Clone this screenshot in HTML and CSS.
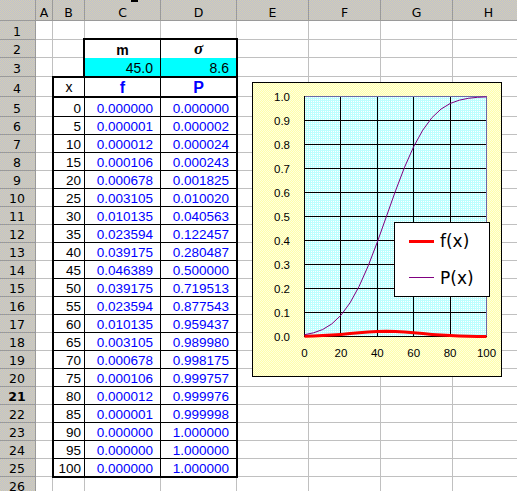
FILE: index.html
```html
<!DOCTYPE html>
<html>
<head>
<meta charset="utf-8">
<title>Sheet</title>
<link rel="stylesheet" href="styles.css">
</head>
<body>
<div class="sheet">
  <div class="hd corner"></div>
  <div class="hd ch">A</div><div class="hd ch">B</div><div class="hd ch cc">C</div><div class="hd ch">D</div><div class="hd ch">E</div><div class="hd ch">F</div><div class="hd ch">G</div><div class="hd ch">H</div>

  <div class="hd rh">1</div><i class="c"></i><i class="c"></i><i class="c"></i><i class="c"></i><i class="c"></i><i class="c"></i><i class="c"></i><i class="c"></i>
  <div class="hd rh">2</div><i class="c"></i><i class="c"></i><i class="c"></i><i class="c"></i><i class="c"></i><i class="c"></i>
  <div class="hd rh">3</div><i class="c"></i><i class="c"></i><i class="c"></i><i class="c"></i><i class="c"></i><i class="c"></i>
  <div class="hd rh">4</div><i class="c"></i><i class="c"></i><i class="c"></i><i class="c"></i><i class="c"></i>
  <div class="hd rh">5</div><i class="c"></i><i class="c"></i><i class="c"></i><i class="c"></i><i class="c"></i>
  <div class="hd rh">6</div><i class="c"></i><i class="c"></i><i class="c"></i><i class="c"></i><i class="c"></i>
  <div class="hd rh">7</div><i class="c"></i><i class="c"></i><i class="c"></i><i class="c"></i><i class="c"></i>
  <div class="hd rh">8</div><i class="c"></i><i class="c"></i><i class="c"></i><i class="c"></i><i class="c"></i>
  <div class="hd rh">9</div><i class="c"></i><i class="c"></i><i class="c"></i><i class="c"></i><i class="c"></i>
  <div class="hd rh">10</div><i class="c"></i><i class="c"></i><i class="c"></i><i class="c"></i><i class="c"></i>
  <div class="hd rh">11</div><i class="c"></i><i class="c"></i><i class="c"></i><i class="c"></i><i class="c"></i>
  <div class="hd rh">12</div><i class="c"></i><i class="c"></i><i class="c"></i><i class="c"></i><i class="c"></i>
  <div class="hd rh">13</div><i class="c"></i><i class="c"></i><i class="c"></i><i class="c"></i><i class="c"></i>
  <div class="hd rh">14</div><i class="c"></i><i class="c"></i><i class="c"></i><i class="c"></i><i class="c"></i>
  <div class="hd rh">15</div><i class="c"></i><i class="c"></i><i class="c"></i><i class="c"></i><i class="c"></i>
  <div class="hd rh">16</div><i class="c"></i><i class="c"></i><i class="c"></i><i class="c"></i><i class="c"></i>
  <div class="hd rh">17</div><i class="c"></i><i class="c"></i><i class="c"></i><i class="c"></i><i class="c"></i>
  <div class="hd rh">18</div><i class="c"></i><i class="c"></i><i class="c"></i><i class="c"></i><i class="c"></i>
  <div class="hd rh">19</div><i class="c"></i><i class="c"></i><i class="c"></i><i class="c"></i><i class="c"></i>
  <div class="hd rh">20</div><i class="c"></i><i class="c"></i><i class="c"></i><i class="c"></i><i class="c"></i>
  <div class="hd rh on">21</div><i class="c"></i><i class="c"></i><i class="c"></i><i class="c"></i><i class="c"></i>
  <div class="hd rh">22</div><i class="c"></i><i class="c"></i><i class="c"></i><i class="c"></i><i class="c"></i>
  <div class="hd rh">23</div><i class="c"></i><i class="c"></i><i class="c"></i><i class="c"></i><i class="c"></i>
  <div class="hd rh">24</div><i class="c"></i><i class="c"></i><i class="c"></i><i class="c"></i><i class="c"></i>
  <div class="hd rh">25</div><i class="c"></i><i class="c"></i><i class="c"></i><i class="c"></i><i class="c"></i>
  <div class="hd rh">26</div><i class="c"></i><i class="c"></i><i class="c"></i><i class="c"></i><i class="c"></i><i class="c"></i><i class="c"></i><i class="c"></i>

  <div class="params">
    <div class="pc pl pm">m</div><div class="pc ps">σ</div>
    <div class="pc pl pv">45.0</div><div class="pc pv">8.6</div>
  </div>

  <div class="data">
    <div class="dc x dh hx">x</div><div class="dc f dh hb">f</div><div class="dc p dh hb">P</div>
    <div class="dc x">0</div><div class="dc f">0.000000</div><div class="dc p">0.000000</div>
    <div class="dc x">5</div><div class="dc f">0.000001</div><div class="dc p">0.000002</div>
    <div class="dc x">10</div><div class="dc f">0.000012</div><div class="dc p">0.000024</div>
    <div class="dc x">15</div><div class="dc f">0.000106</div><div class="dc p">0.000243</div>
    <div class="dc x">20</div><div class="dc f">0.000678</div><div class="dc p">0.001825</div>
    <div class="dc x">25</div><div class="dc f">0.003105</div><div class="dc p">0.010020</div>
    <div class="dc x">30</div><div class="dc f">0.010135</div><div class="dc p">0.040563</div>
    <div class="dc x">35</div><div class="dc f">0.023594</div><div class="dc p">0.122457</div>
    <div class="dc x">40</div><div class="dc f">0.039175</div><div class="dc p">0.280487</div>
    <div class="dc x">45</div><div class="dc f">0.046389</div><div class="dc p">0.500000</div>
    <div class="dc x">50</div><div class="dc f">0.039175</div><div class="dc p">0.719513</div>
    <div class="dc x">55</div><div class="dc f">0.023594</div><div class="dc p">0.877543</div>
    <div class="dc x">60</div><div class="dc f">0.010135</div><div class="dc p">0.959437</div>
    <div class="dc x">65</div><div class="dc f">0.003105</div><div class="dc p">0.989980</div>
    <div class="dc x">70</div><div class="dc f">0.000678</div><div class="dc p">0.998175</div>
    <div class="dc x">75</div><div class="dc f">0.000106</div><div class="dc p">0.999757</div>
    <div class="dc x">80</div><div class="dc f">0.000012</div><div class="dc p">0.999976</div>
    <div class="dc x">85</div><div class="dc f">0.000001</div><div class="dc p">0.999998</div>
    <div class="dc x">90</div><div class="dc f">0.000000</div><div class="dc p">1.000000</div>
    <div class="dc x">95</div><div class="dc f">0.000000</div><div class="dc p">1.000000</div>
    <div class="dc x e">100</div><div class="dc f e">0.000000</div><div class="dc p e">1.000000</div>
  </div>

  <div class="chart">
    <svg width="248" height="293" viewBox="0 0 248 293" xmlns="http://www.w3.org/2000/svg">
      <defs>
        <pattern id="cy" width="2" height="2" patternUnits="userSpaceOnUse">
          <rect width="2" height="2" fill="#bcffff"/>
          <rect width="1" height="1" fill="#ffffff"/>
        </pattern>
      </defs>
      <rect x="51" y="13" width="183" height="241" fill="url(#cy)"/>
      <g stroke="#000" stroke-width="1" shape-rendering="crispEdges">
        <line x1="87.5" y1="13" x2="87.5" y2="254"/>
        <line x1="124.5" y1="13" x2="124.5" y2="254"/>
        <line x1="160.5" y1="13" x2="160.5" y2="254"/>
        <line x1="197.5" y1="13" x2="197.5" y2="254"/>
        <line x1="51" y1="37.5" x2="234" y2="37.5"/>
        <line x1="51" y1="61.5" x2="234" y2="61.5"/>
        <line x1="51" y1="85.5" x2="234" y2="85.5"/>
        <line x1="51" y1="109.5" x2="234" y2="109.5"/>
        <line x1="51" y1="133.5" x2="234" y2="133.5"/>
        <line x1="51" y1="157.5" x2="234" y2="157.5"/>
        <line x1="51" y1="181.5" x2="234" y2="181.5"/>
        <line x1="51" y1="205.5" x2="234" y2="205.5"/>
        <line x1="51" y1="229.5" x2="234" y2="229.5"/>
      </g>
      <g stroke="#6a6aa8" stroke-width="1" shape-rendering="crispEdges">
        <line x1="51" y1="13.5" x2="234" y2="13.5"/>
        <line x1="233.5" y1="13" x2="233.5" y2="254"/>
      </g>
      <g stroke="#000" stroke-width="1" shape-rendering="crispEdges">
        <line x1="51.5" y1="13" x2="51.5" y2="254"/>
        <line x1="51" y1="253.5" x2="234" y2="253.5"/>
      </g>
      <polyline fill="none" stroke="#ff0000" stroke-width="3" stroke-linejoin="round"
        points="51.5,253.2 60.6,253.0 69.7,252.6 78.8,252.1 87.9,251.4 97.0,250.6 106.1,249.8 115.2,249.0 124.3,248.5 133.4,248.3 142.5,248.5 151.6,249.0 160.7,249.8 169.8,250.6 178.9,251.4 188.0,252.1 197.1,252.6 206.2,253.0 215.3,253.2 224.4,253.4 233.5,253.4"/>
      <polyline fill="none" stroke="#800080" stroke-width="1"
        points="51.5,251.7 60.6,249.8 69.7,246.5 78.8,240.9 87.9,232.3 97.0,219.9 106.1,203.4 115.2,182.9 124.3,159.1 133.4,133.5 142.5,107.9 151.6,84.1 160.7,63.6 169.8,47.1 178.9,34.7 188.0,26.1 197.1,20.5 206.2,17.2 215.3,15.3 224.4,14.3 233.5,13.9"/>
      <g class="ax" text-anchor="end">
        <text x="37" y="17.5">1.0</text>
        <text x="37" y="41.5">0.9</text>
        <text x="37" y="65.5">0.8</text>
        <text x="37" y="89.5">0.7</text>
        <text x="37" y="113.5">0.6</text>
        <text x="37" y="137.5">0.5</text>
        <text x="37" y="161.5">0.4</text>
        <text x="37" y="185.5">0.3</text>
        <text x="37" y="209.5">0.2</text>
        <text x="37" y="233.5">0.1</text>
        <text x="37" y="257.5">0.0</text>
      </g>
      <g class="ax" text-anchor="middle">
        <text x="51.5" y="274">0</text>
        <text x="87.9" y="274">20</text>
        <text x="124.3" y="274">40</text>
        <text x="160.7" y="274">60</text>
        <text x="197.1" y="274">80</text>
        <text x="233.5" y="274">100</text>
      </g>
    </svg>
    <div class="legend">
      <div class="li first"><span class="sw"></span><span>f(x)</span></div>
      <div class="li"><span class="sw pp"></span><span>P(x)</span></div>
    </div>
  </div>
</div>
</body>
</html>
```
FILE: styles.css
```css
html, body {
  margin: 0;
  padding: 0;
  overflow: hidden;
  background: #fff;
}
body {
  width: 517px;
  height: 491px;
  font-family: "DejaVu Sans", sans-serif;
  font-size: 12px;
  color: #000;
}
.sheet {
  position: relative;
  display: grid;
  grid-template-columns: 36px 17px 32px 76px 76px 72px 72px 72px 72px;
  grid-template-rows: 21px 19px 18px 19px 20px 20px repeat(21, 18px);
  width: 525px;
}
.sheet > * {
  box-sizing: border-box;
}
.c {
  display: block;
  border-right: 1px solid #c0c0c0;
  border-bottom: 1px solid #c0c0c0;
  background: #fff;
}
.hd {
  position: relative;
  display: flex;
  justify-content: center;
  align-items: flex-end;
  background-color: #c9c7b8;
  background-image: repeating-conic-gradient(#d5d1ad 0 25%, #bdbdd3 0 50%);
  background-size: 2px 2px;
  border-right: 1px solid #9a9a9a;
  border-bottom: 1px solid #9a9a9a;
  font-family: "DejaVu Sans", sans-serif;
  font-size: 12.5px;
  line-height: normal;
}
.rh {
  padding-right: 1px;
}
.rh.on {
  font-weight: bold;
}
.cc::before {
  content: "";
  position: absolute;
  left: 46px;
  top: 0;
  width: 7px;
  height: 2px;
  background: #000;
}

/* parameter box m / sigma */
.params {
  grid-column: 4 / 6;
  grid-row: 3 / 5;
  margin: -2px -1px -1px -2px;
  border: 2px solid #000;
  display: grid;
  grid-template-columns: 76px 75px;
  grid-template-rows: 18px 18px;
  background: #fff;
}
.pc {
  box-sizing: border-box;
  display: flex;
  align-items: flex-end;
  justify-content: center;
  font-family: "Liberation Sans", Arial, sans-serif;
}
.pl {
  border-right: 1px solid #000;
}
.pm {
  font-weight: bold;
  font-size: 14px;
}
.ps {
  font-family: "Liberation Serif", "Times New Roman", serif;
  font-style: italic;
  font-weight: bold;
  font-size: 17px;
  line-height: 17px;
  padding-bottom: 1px;
}
.pv {
  background: #00ffff;
  justify-content: flex-end;
  padding-right: 7px;
  font-size: 14px;
}

/* data table */
.data {
  grid-column: 3 / 6;
  grid-row: 5 / 27;
  margin: -1px;
  border: 2px solid #000;
  display: grid;
  grid-template-columns: 31px 76px 75px;
  grid-template-rows: 20px 19px repeat(19, 18px) 17px;
  background: #fff;
}
.dc {
  box-sizing: border-box;
  display: flex;
  align-items: flex-end;
  justify-content: flex-end;
  border-bottom: 1px solid #000;
  font-family: "Liberation Sans", Arial, sans-serif;
  font-size: 13.5px;
  line-height: normal;
  white-space: nowrap;
}
.dc.x {
  border-right: 1px solid #000;
  padding-right: 3px;
}
.dc.f {
  border-right: 1px solid #000;
  padding-right: 7px;
  color: #0000ff;
}
.dc.p {
  padding-right: 7px;
  color: #0000ff;
}
.dc.e {
  border-bottom: none;
}
.dh {
  justify-content: center;
  border-bottom: 2px solid #000;
}
.dc.dh {
  padding-right: 0;
}
.hx {
  font-family: "Liberation Sans", Arial, sans-serif;
  font-size: 14px;
  padding-bottom: 1px;
}
.hb {
  font-family: "Liberation Sans", Arial, sans-serif;
  font-weight: bold;
  font-size: 16px;
  line-height: 17px;
}

/* chart object */
.chart {
  position: absolute;
  left: 252px;
  top: 82px;
  width: 250px;
  height: 295px;
  box-sizing: border-box;
  border: 1px solid #000;
  background-color: #ffffc8;
  background-image: repeating-conic-gradient(#ffffaa 0 25%, #ffffe0 0 50%);
  background-size: 2px 2px;
}
.chart svg {
  display: block;
}
.ax {
  font-family: "Liberation Sans", Arial, sans-serif;
  font-size: 11.5px;
  fill: #000;
}
.legend {
  position: absolute;
  left: 141px;
  top: 139px;
  width: 96px;
  height: 75px;
  box-sizing: border-box;
  border: 1px solid #000;
  background: #fff;
  display: flex;
  flex-direction: column;
}
.li {
  height: 37px;
  display: flex;
  align-items: center;
  gap: 6px;
  padding-left: 14px;
  font-family: "DejaVu Sans", sans-serif;
  font-size: 17px;
}
.li.first {
  height: 36px;
}
.sw {
  width: 25px;
  height: 3px;
  background: #ff0000;
}
.sw.pp {
  height: 1px;
  background: #800080;
}
```
